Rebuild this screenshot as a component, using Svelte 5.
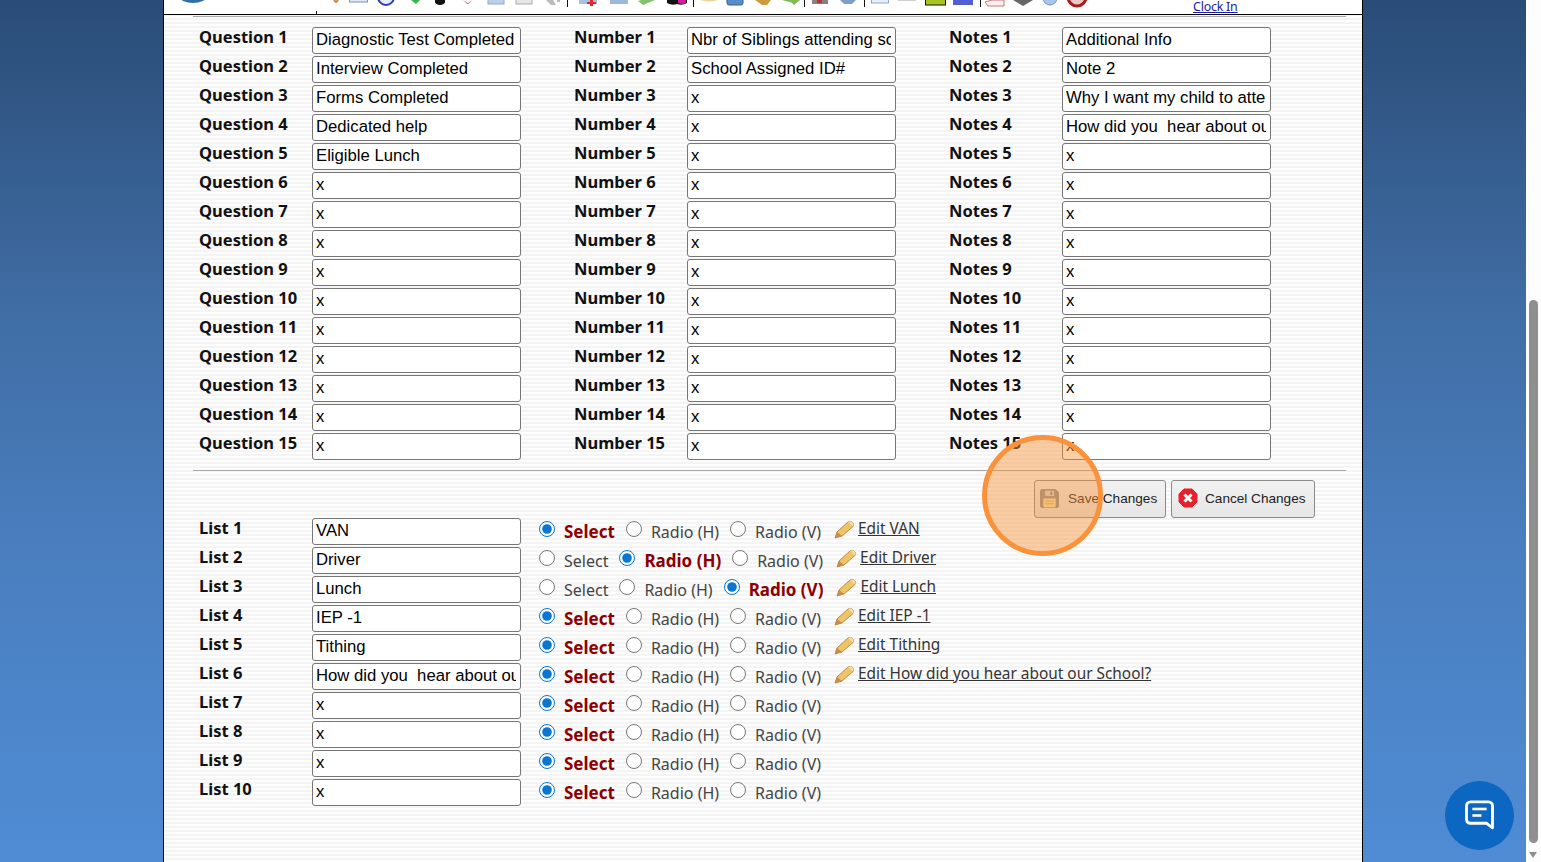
<script>
  const q = ['Diagnostic Test Completed','Interview Completed','Forms Completed','Dedicated help','Eligible Lunch'];
  const n = ['Nbr of Siblings attending school','School Assigned ID#'];
  const t = ['Additional Info','Note 2','Why I want my child to attend','How did you  hear about our School?'];
  const column = (name, vals) => Array.from({ length: 15 }, (_, i) => ({ label: `${name} ${i + 1}`, value: vals[i] ?? 'x' }));
  const columns = [column('Question', q), column('Number', n), column('Notes', t)];
  const listNames = ['VAN','Driver','Lunch','IEP -1','Tithing','How did you  hear about our School?'];
  const editNames = ['VAN','Driver','Lunch','IEP -1','Tithing','How did you hear about our School?'];
  const modes = ['Select','Radio (H)','Radio (V)'];
  const selected = [0,1,2,0,0,0,0,0,0,0];
  const lists = selected.map((sel, i) => ({ label: `List ${i + 1}`, value: listNames[i] ?? 'x', edit: editNames[i], sel }));
</script>

<div class="page">
  <main class="backdrop">
    <div class="sheet">
      <header class="toolbar">
        <svg class="strip" width="1198" height="14" viewBox="164 0 1198 14">
          <ellipse cx="193" cy="-3" rx="13" ry="6" fill="#2f6ea8"/>
          <path d="M316.5 11v3M567.5 0v7M693.5 0v7M804.5 0v7M864.5 0v7M980.5 0v7" stroke="#111" fill="none"/>
          <path d="M333 0h6l-2 3h-2z" fill="#c9965b"/>
          <rect x="349.500" y="-6" width="18" height="8" fill="#dfe8f5" stroke="#7d93b8"/>
          <circle cx="386" cy="-3" r="8" fill="#e8ecff" stroke="#2c3cb8" stroke-width="2"/>
          <path d="M411 0h9l-4 4z" fill="#35b54a"/>
          <path d="M435 0h10v2a5 3 0 0 1-10 0z" fill="#111"/>
          <path d="M463 0l5 3 4-3-3 4h-2z" fill="#d9898c"/>
          <rect x="488" y="-4" width="16" height="8" fill="#bcd0ec" stroke="#8ea9d0"/>
          <rect x="516" y="-4" width="16" height="8" fill="#e6e6e6" stroke="#aaa"/>
          <path d="M546 0h7l3 5h-5zM557 0h3v2h-3z" fill="#bbb"/>
          <rect x="579" y="-4" width="18" height="8" fill="#a9c0e4"/>
          <path d="M590 0h3v2h3v2h-3v2h-3v-2h-3v-2h3z" fill="#e8242c"/>
          <rect x="610" y="-4" width="18" height="8" fill="#9db7dd"/>
          <path d="M638 1l5 4 12-5h-14z" fill="#86c26c"/>
          <path d="M667 0h20v3q-5 3-10 1q-5 2-10-1z" fill="#111"/>
          <path d="M678 0h8v3q-4 2-8 0z" fill="#d11d9b"/>
          <path d="M700 0h18q-8 3-18 0z" fill="#ecd6a3"/>
          <rect x="727" y="-4" width="16" height="9" rx="2" fill="#5b8ccb" stroke="#35608f"/>
          <path d="M755 0h16l-4 5h-5z" fill="#cf9a44"/>
          <path d="M782 0h12l-1 3zM789 0h11l-6 5z" fill="#7fbb55"/>
          <rect x="812" y="-4" width="16" height="8" fill="#8c7f7f"/>
          <rect x="817" y="0" width="5" height="3" fill="#b33"/>
          <path d="M840 0h16l-4 4h-8z" fill="#7f9fc8"/>
          <rect x="871.500" y="-4" width="17" height="7" fill="#e5eefa" stroke="#90a6c8"/>
          <rect x="898" y="0" width="18" height="1" fill="#cfcfcf"/>
          <rect x="925.500" y="-3" width="20" height="8" fill="#a8c523" stroke="#111"/>
          <rect x="953" y="-3" width="20" height="8" fill="#5060d0"/>
          <path d="M985 2l3 4h16v-6h-12z" fill="#f7f0f0" stroke="#c77"/>
          <path d="M1013 0h20l-10 6z" fill="#666"/>
          <circle cx="1050" cy="-2" r="7" fill="#a8c6e6" stroke="#6f94c0"/>
          <circle cx="1077" cy="-3" r="9" fill="#e8c8c8" stroke="#a81c1c" stroke-width="3"/>
        </svg>
        <a class="clock" href="#clock">Clock In</a>
      </header>

      <div class="body">
        <hr class="rule" />

        <section class="fields">
          {#each columns as col}
            <div class="field-col">
              {#each col as row}
                <div class="field">
                  <span class="name">{row.label}</span>
                  <input class="box" type="text" value={row.value} />
                </div>
              {/each}
            </div>
          {/each}
        </section>

        <hr class="rule lower" />

        <div class="actions">
          <button class="btn save">
            <svg width="21" height="21" viewBox="0 0 24 24">
              <path d="M2 3a1 1 0 0 1 1-1h16l3 3v16a1 1 0 0 1-1 1H3a1 1 0 0 1-1-1z" fill="#929292" stroke="#6f6f6f"/>
              <rect x="7" y="3" width="10" height="6" fill="#d8d8d8"/>
              <rect x="13" y="4" width="2" height="4" fill="#808080"/>
              <rect x="5" y="12" width="14" height="10" fill="#f6e6a8"/>
              <path d="M7 15h10M7 18h10" stroke="#c2a95e"/>
            </svg>
            <span>Save Changes</span>
          </button>
          <button class="btn cancel">
            <svg width="20" height="20" viewBox="0 0 20 20">
              <path d="M6 1h8l5 5v8l-5 5H6l-5-5V6z" fill="#e8202c" stroke="#e8202c" stroke-linejoin="round"/>
              <path d="M6.500 6.500l7 7M13.500 6.500l-7 7" stroke="#fff" stroke-width="3"/>
            </svg>
            <span>Cancel Changes</span>
          </button>
        </div>

        <section class="lists">
          {#each lists as row, r}
            <div class="list-row">
              <span class="name list-name">{row.label}</span>
              <input class="box" type="text" value={row.value} />
              <div class="modes">
                {#each modes as m, i}
                  <label class="mode">
                    <input class="radio" type="radio" name={`list${r}`} checked={row.sel === i} />
                    <span class:on={row.sel === i}>{m}</span>
                  </label>
                {/each}
              </div>
              {#if row.edit}
                <span class="edit">
                  <svg class="pencil" width="21" height="19" viewBox="0 0 21 19">
                    <path d="M1 18l2-6L14 2q2-1.500 4 0l1 1q1.500 2 0 3.500L8 16z" fill="#eec468" stroke="#c08a3a"/>
                    <path d="M14 2q2-1.500 4 0l1 1q1.500 2 0 3.500z" fill="#f3dfa8"/>
                    <path d="M1 18l2-6 5 4z" fill="#c98b4e"/>
                  </svg>
                  <a href="#edit">Edit {row.edit}</a>
                </span>
              {/if}
            </div>
          {/each}
        </section>
      </div>
    </div>
  </main>

  <aside class="scrollbar">
    <div class="thumb"></div>
    <div class="arrow"></div>
  </aside>

  <div class="spot"></div>

  <button class="chat" aria-label="Chat">
    <svg width="39" height="39" viewBox="0 0 30 30" fill="none">
      <path d="M5 7.500a3 3 0 0 1 3-3h14a3 3 0 0 1 3 3v17l-4.500-3.500H8a3 3 0 0 1-3-3z" stroke="#fff" stroke-width="2.200" stroke-linejoin="round"/>
      <path d="M9.500 10h11" stroke="#fff" stroke-width="2"/>
      <path d="M9.500 15h7" stroke="#fff" stroke-width="2"/>
    </svg>
  </button>
</div>

<style>
  :global(body) { margin: 0; overflow: hidden; }
  .page { position: relative; display: flex; width: 1541px; height: 862px; overflow: hidden; font-family: "Noto Sans", sans-serif; }
  .backdrop { width: 1526px; height: 862px; background: linear-gradient(180deg, #2a4c77 0, #3f6ca3 300px, #4a7fc0 560px, #4f8cd4 862px); }
  .sheet { margin-left: 163px; width: 1198px; height: 862px; border-left: 1px solid #000; border-right: 1px solid #000; background: repeating-linear-gradient(180deg, #fdfdfd 0 2px, #f4f4f4 2px 4px); }
  .toolbar { position: relative; height: 14px; background: #fff; border-bottom: 1px solid #000; }
  .strip { display: block; }
  .clock { position: absolute; left: 1029px; top: 0; font: 12.400px/14px "Noto Sans", sans-serif; color: #1a1aa6; letter-spacing: -0.2px; }
  .body { padding: 0 16px 0 29px; }
  .rule { margin: 1px 0 0; height: 1px; border: 0; background: #a8a8a8; }
  .lower { margin-top: 10px; }
  .fields { display: flex; gap: 53px; margin: 10px 0 0 6px; }
  .field-col { display: flex; flex-direction: column; gap: 2px; width: 322px; }
  .field { display: flex; height: 27px; }
  .name { width: 113px; flex: none; font: 700 16.500px/20px "Noto Sans", sans-serif; color: #111; }
  .box { box-sizing: border-box; flex: none; width: 209px; height: 27px; padding: 0 4px 2px 3px; border: 1px solid #767676; border-radius: 3px; background: #fff; color: #000; font: 16.700px "Liberation Sans", sans-serif; outline: none; }
  .actions { display: flex; justify-content: flex-end; gap: 5px; padding: 9px 31px 0 0; }
  .btn { display: flex; align-items: center; box-sizing: border-box; height: 38px; padding: 0 0 2px; border: 1px solid #8a8a8a; border-radius: 3px; background: linear-gradient(180deg, #f2f2f2, #e6e6e6); color: #222; font: 13.600px "Liberation Sans", sans-serif; }
  .save { width: 132px; padding-left: 4px; gap: 8px; }
  .cancel { width: 144px; padding-left: 6px; gap: 7px; }
  .lists { display: flex; flex-direction: column; gap: 2px; margin-left: 6px; }
  .list-row { display: flex; height: 27px; }
  .modes { display: flex; gap: 11px; margin-left: 18px; }
  .mode { display: flex; gap: 9px; font: 16px/20px "Noto Sans", sans-serif; color: #444; padding-top: 4px; }
  .mode span { white-space: nowrap; }
  .on { font-weight: 700; font-size: 17px; color: #8b0000; }
  .radio { width: 16px; height: 16px; margin: -1px 0 0; accent-color: #0b76d1; }
  .edit { display: flex; gap: 3px; margin-left: 13px; padding-top: 1px; height: 20px; font: 15.400px/20px "Noto Sans", sans-serif; white-space: nowrap; }
  .pencil { margin-top: 1px; }
  .edit a { color: #333; }
  .scrollbar { position: relative; width: 15px; height: 862px; background: #fdfdfd; }
  .thumb { position: absolute; left: 3px; top: 300px; width: 9px; height: 543px; border-radius: 5px; background: #8f8f8f; }
  .arrow { position: absolute; left: 3px; top: 852px; border-left: 4.500px solid transparent; border-right: 4.500px solid transparent; border-top: 6px solid #8f8f8f; }
  .spot { position: absolute; left: 982px; top: 435px; box-sizing: border-box; width: 121px; height: 121px; border: 5px solid #f9923a; border-radius: 50%; background: rgba(249, 146, 58, 0.45); }
  .chat { position: absolute; left: 1445px; top: 781px; display: flex; align-items: center; justify-content: center; width: 69px; height: 69px; padding: 0; border: 0; border-radius: 50%; background: #0b67c2; }
</style>
